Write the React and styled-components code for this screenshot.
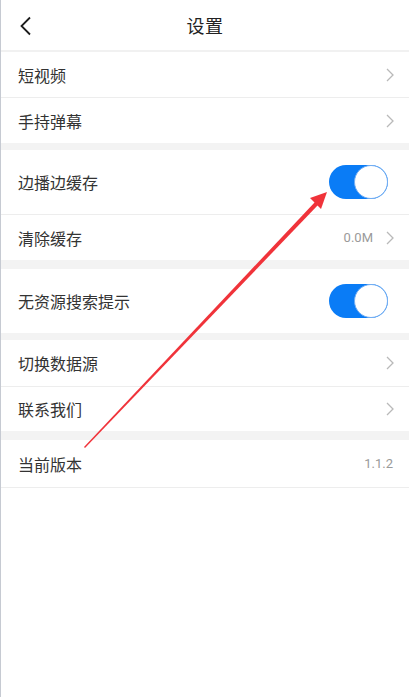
import styled, { createGlobalStyle } from 'styled-components';

const GlobalStyle = createGlobalStyle`
    html, body {
        margin: 0;
        padding: 0;
        background: #ffffff;
    }
    body {
        font-family: "Noto Sans CJK SC", "Noto Sans", sans-serif;
    }
`;

const Page = styled.div`
    position: relative;
    width: 409px;
    height: 697px;
    box-sizing: border-box;
    border-left: 1px solid #c6cad2;
    background: #ffffff;
    overflow: hidden;
`;

const Header = styled.div`
    height: 50px;
    display: flex;
    align-items: center;
    justify-content: center;
    position: relative;
    border-bottom: 2px solid #f1f1f1;

    .back {
        position: absolute;
        left: 18px;
        top: 16px;
    }
`;

const Title = styled.div`
    font-size: 18px;
    color: #222;
    letter-spacing: 0.5px;
`;

const Gap = styled.div`
    height: ${(p) => p.h || 8}px;
    background: #f3f3f3;
`;

const Row = styled.div`
    height: ${(p) => p.h || 45}px;
    display: flex;
    align-items: center;
    justify-content: space-between;
    padding: 0 14px 0 17px;
    border-bottom: ${(p) => (p.last ? 'none' : '1px solid #ededed')};
`;

const Label = styled.span`
    font-size: 16px;
    color: #333;
`;

const Right = styled.div`
    display: flex;
    align-items: center;
    gap: 12px;
`;

const Value = styled.span`
    font-family: Roboto, "Noto Sans", sans-serif;
    font-size: 13px;
    color: #9a9a9a;
    margin-right: ${(p) => (p.end ? '2px' : '0')};
`;

const Toggle = styled.div`
    width: 59px;
    height: 34px;
    border-radius: 17px;
    background: #0a7cf6;
    box-sizing: border-box;
    position: relative;
    margin-right: 7px;

    &::after {
        content: '';
        position: absolute;
        right: 0;
        top: 0;
        width: 34px;
        height: 34px;
        border-radius: 50%;
        background: #fff;
        border: 1px solid #74aef2;
        box-sizing: border-box;
    }
`;

const Arrow = styled.svg`
    position: absolute;
    left: 0;
    top: 0;
    pointer-events: none;
`;

const Chevron = () => (
    <svg width="10" height="14" viewBox="0 0 10 14">
        <path d="M2 1 L8 7 L2 13" fill="none" stroke="#b9b9b9" strokeWidth="1.3" />
    </svg>
);

const BackIcon = () => (
    <svg className="back" width="14" height="20" viewBox="0 0 14 20">
        <path d="M11 1.5 L2.5 10 L11 18.5" fill="none" stroke="#1c1c1c" strokeWidth="1.8" />
    </svg>
);

const App = () => (
    <>
        <GlobalStyle />
        <Page>
            <Header>
                <BackIcon />
                <Title>设置</Title>
            </Header>

            <Row>
                <Label>短视频</Label>
                <Chevron />
            </Row>
            <Row last>
                <Label>手持弹幕</Label>
                <Chevron />
            </Row>
            <Gap h={7} />

            <Row h={64}>
                <Label>边播边缓存</Label>
                <Toggle />
            </Row>
            <Row last>
                <Label>清除缓存</Label>
                <Right>
                    <Value>0.0M</Value>
                    <Chevron />
                </Right>
            </Row>
            <Gap h={9} />

            <Row h={64} last>
                <Label>无资源搜索提示</Label>
                <Toggle />
            </Row>
            <Gap h={7} />

            <Row h={46}>
                <Label>切换数据源</Label>
                <Chevron />
            </Row>
            <Row h={44} last>
                <Label>联系我们</Label>
                <Chevron />
            </Row>
            <Gap h={9} />

            <Row h={47}>
                <Label>当前版本</Label>
                <Value end>1.1.2</Value>
            </Row>

            <Arrow width="409" height="697" viewBox="0 0 409 697">
                <polygon points="83,447 84,448 317,205 314,202" fill="#f0333a" />
                <polygon points="326,192 309,198 320,209" fill="#f0333a" />
            </Arrow>
        </Page>
    </>
);

export default App;
